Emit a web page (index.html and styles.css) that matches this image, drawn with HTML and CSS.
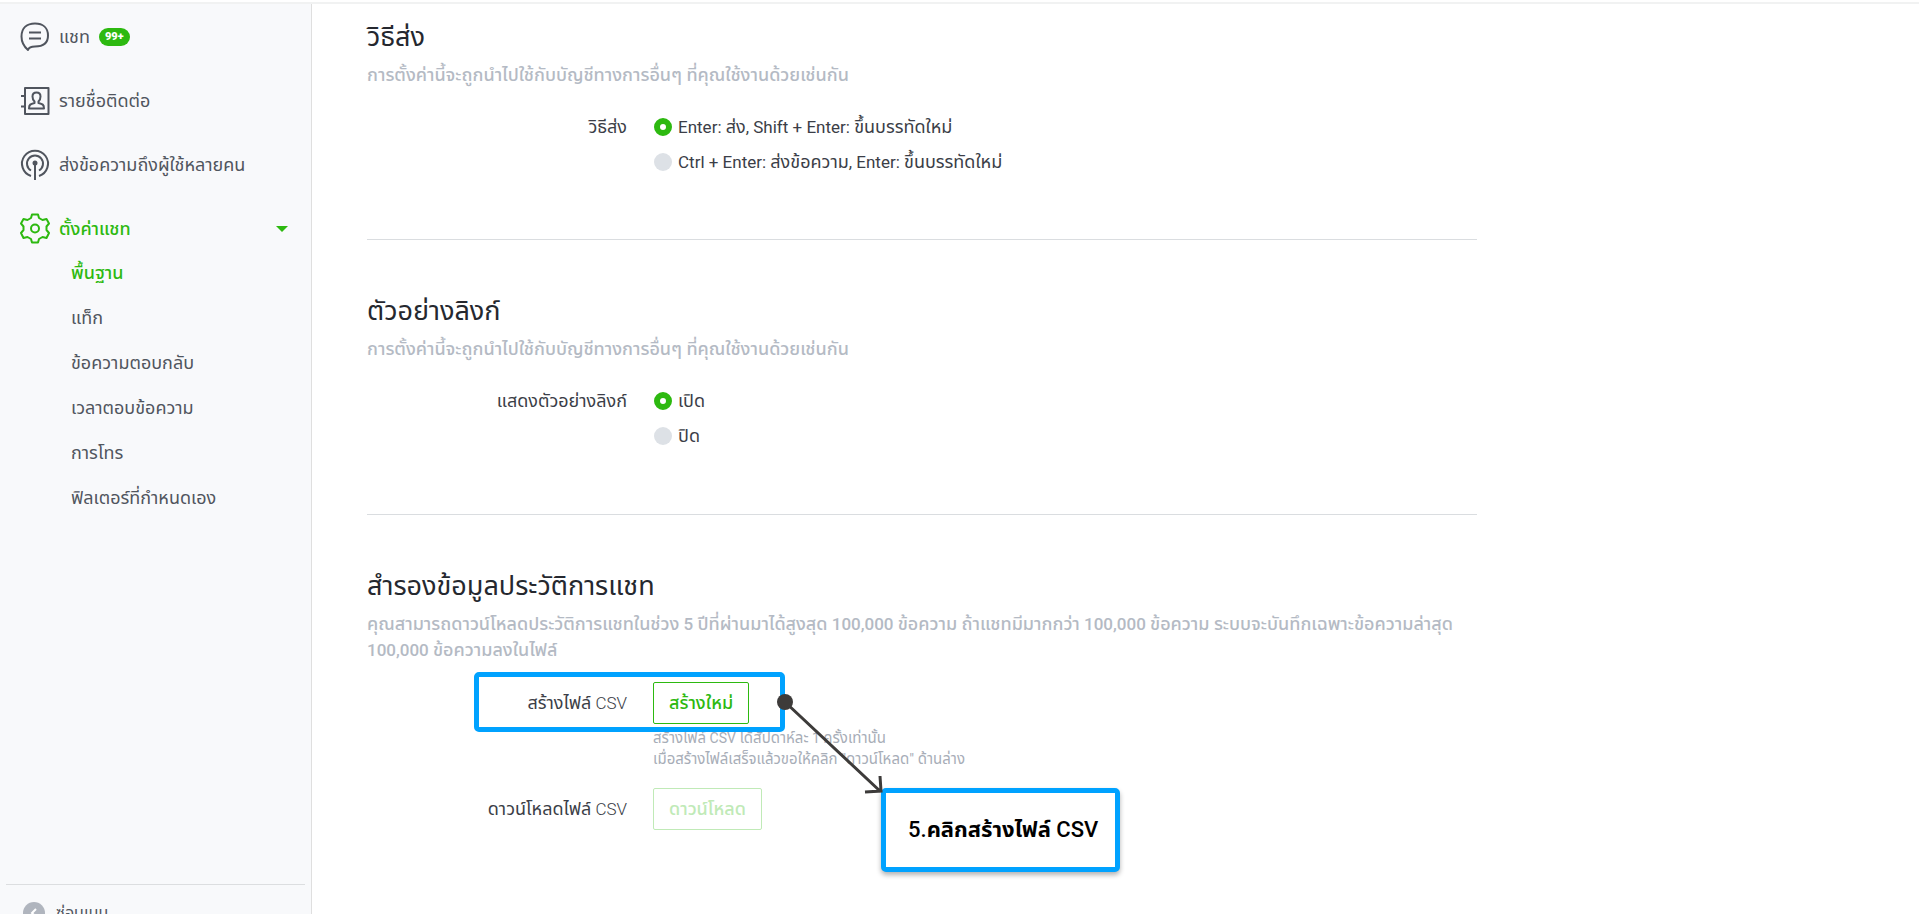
FILE: index.html
```html
<!DOCTYPE html>
<html lang="th">
<head>
  <meta charset="UTF-8">
  <title>ตั้งค่าแชท</title>
  <meta name="viewport" content="width=device-width, initial-scale=1.0">
  <link rel="stylesheet" href="styles.css">
</head>
<body>

  <div class="app">
    <aside class="sidebar">
      <nav>
        <a class="nav-item" href="#">
          <svg class="icon" viewBox="0 0 30 30"><path d="M8 28 C4.500 25 1.500 21 1.500 14.500 C1.500 6 7 1.500 15 1.500 C23 1.500 28 6 28 13.500 C28 21 23 24.500 15 24.500 C11 24.500 9 25 8 28 Z M9 10.500 H21 M9 16.500 H21"/></svg>
          <span>แชท</span>
          <span class="badge">99+</span>
        </a>
        <a class="nav-item" href="#">
          <svg class="icon" viewBox="0 0 30 30"><path d="M5 2 H28.500 V28 H5 Z M1 10 H5 M1 20.500 H5 M9 22.500 H24 C24 18.500 22.500 18 18.500 17 V15.500 C20 14 20.500 12.500 20.500 10.500 C20.500 8 19 6.500 16.500 6.500 C14 6.500 12.500 8 12.500 10.500 C12.500 12.500 13 14 14.500 15.500 V17 C10.500 18 9 18.500 9 22.500 Z"/></svg>
          <span>รายชื่อติดต่อ</span>
        </a>
        <a class="nav-item" href="#">
          <svg class="icon" viewBox="0 0 30 30"><path d="M11 26 A13 13 0 1 1 19 26 M11 20.500 A8 8 0 1 1 19 20.500 M15 13 V30"/><circle class="fill" cx="15" cy="13" r="2.500"/></svg>
          <span>ส่งข้อความถึงผู้ใช้หลายคน</span>
        </a>
        <a class="nav-item active" href="#">
          <svg class="icon" viewBox="0 0 30 30"><path d="M12 .5 H18 L19 4 L22.500 6 L26.500 5 L29 9.500 L26.500 12.500 V16 L29 19 L26.500 24 L22.500 23 L19 25 L18 28.500 H12 L11 25 L7.500 23 L3.500 24 L1 19 L3.500 16 V12.500 L1 9.500 L3.500 5 L7.500 6 L11 4 Z"/><circle cx="15" cy="14.500" r="4"/></svg>
          <span>ตั้งค่าแชท</span>
          <svg class="caret" viewBox="0 0 12 6"><path d="M0 0 H12 L6 6 Z"/></svg>
        </a>
        <div class="subnav">
          <a class="current" href="#">พื้นฐาน</a>
          <a href="#">แท็ก</a>
          <a href="#">ข้อความตอบกลับ</a>
          <a href="#">เวลาตอบข้อความ</a>
          <a href="#">การโทร</a>
          <a href="#">ฟิลเตอร์ที่กำหนดเอง</a>
        </div>
      </nav>
      <button class="hide-menu" type="button">
        <svg viewBox="0 0 22 22"><circle cx="11" cy="11" r="11"/><path d="M13 7 L9 11 L13 15"/></svg>
        ซ่อนเมนู
      </button>
    </aside>

    <main class="content">
      <section>
        <h2>วิธีส่ง</h2>
        <p class="desc">การตั้งค่านี้จะถูกนำไปใช้กับบัญชีทางการอื่นๆ ที่คุณใช้งานด้วยเช่นกัน</p>
        <div class="row" role="radiogroup" aria-labelledby="send-label">
          <span class="label" id="send-label">วิธีส่ง</span>
          <div class="options">
            <label><input type="radio" name="send" checked><span><span class="en">Enter: </span>ส่ง<span class="en">, Shift + Enter: </span>ขึ้นบรรทัดใหม่</span></label>
            <label><input type="radio" name="send"><span><span class="en">Ctrl + Enter: </span>ส่งข้อความ<span class="en">, Enter: </span>ขึ้นบรรทัดใหม่</span></label>
          </div>
        </div>
      </section>

      <section>
        <h2>ตัวอย่างลิงก์</h2>
        <p class="desc">การตั้งค่านี้จะถูกนำไปใช้กับบัญชีทางการอื่นๆ ที่คุณใช้งานด้วยเช่นกัน</p>
        <div class="row" role="radiogroup" aria-labelledby="preview-label">
          <span class="label" id="preview-label">แสดงตัวอย่างลิงก์</span>
          <div class="options">
            <label><input type="radio" name="preview" checked><span>เปิด</span></label>
            <label><input type="radio" name="preview"><span>ปิด</span></label>
          </div>
        </div>
      </section>

      <section>
        <h2>สำรองข้อมูลประวัติการแชท</h2>
        <p class="desc">คุณสามารถดาวน์โหลดประวัติการแชทในช่วง<span class="en"> 5 </span>ปีที่ผ่านมาได้สูงสุด<span class="en"> 100,000 </span>ข้อความ ถ้าแชทมีมากกว่า<span class="en"> 100,000 </span>ข้อความ ระบบจะบันทึกเฉพาะข้อความล่าสุด<span class="en"> 100,000 </span>ข้อความลงในไฟล์</p>
        <div class="row csv">
          <label class="label" for="create">สร้างไฟล์<span class="en light"> CSV</span></label>
          <div>
            <button class="btn" id="create" type="button">สร้างใหม่</button>
            <p class="hint">สร้างไฟล์<span class="en"> CSV </span>ได้สัปดาห์ละ<span class="en"> 1 </span>ครั้งเท่านั้น<br>เมื่อสร้างไฟล์เสร็จแล้วขอให้คลิก "ดาวน์โหลด" ด้านล่าง</p>
          </div>
          <div class="highlight"></div>
          <div class="callout">5.<b>คลิกสร้างไฟล์</b> CSV</div>
          <svg class="arrow" viewBox="0 0 110 110"><path d="M8 8 L104 98 M88 98 L104 97 L103 82"/><circle cx="8" cy="8" r="8"/></svg>
        </div>
        <div class="row">
          <label class="label" for="download">ดาวน์โหลดไฟล์<span class="en light"> CSV</span></label>
          <button class="btn" id="download" type="button" disabled>ดาวน์โหลด</button>
        </div>
      </section>
    </main>
  </div>

</body>
</html>
```

FILE: styles.css
```css
* { box-sizing: border-box; }
body { margin: 0; font-family: Roboto, "Noto Sans Thai", "Noto Sans", sans-serif; font-size: 18px; color: #3b3e47; background: #fff; }
h2, p { margin: 0; }
a { color: inherit; text-decoration: none; }
button { font-family: inherit; cursor: pointer; }
/* latin runs sit one step below the thai size */
.en { font-size: 17px; }

.app { display: flex; height: 100vh; overflow: hidden; padding-top: 4px; background: linear-gradient(#fff 2px, #f1f2f2 2px, #f1f2f2 4px, #fff 4px); }

/* sidebar */
.sidebar { display: flex; flex-direction: column; flex: none; width: 312px; padding-top: 1px; background: #f8f9fb; border-right: 1px solid #dfdfdf; color: #50555e; }
.nav-item { display: flex; align-items: center; height: 64px; padding: 0 23px 0 20px; }
.icon { width: 30px; height: 30px; margin-right: 9px; overflow: visible; fill: none; stroke: #50555e; stroke-width: 2; stroke-linejoin: round; }
.icon .fill { fill: #50555e; stroke: none; }
.badge { margin-left: 9px; padding: 0 6px; height: 18px; line-height: 18px; border-radius: 9px; background: #2db910; color: #fff; font-size: 11px; font-weight: 900; }
.active { color: #2db910; font-weight: 500; }
.active .icon { stroke: #2db910; }
.caret { width: 12px; height: 6px; margin-left: auto; fill: #2db910; }
.subnav { margin-top: -10px; }
.subnav a { display: flex; align-items: center; height: 45px; padding-left: 71px; }
.subnav .current { color: #2db910; font-weight: 500; }
.hide-menu { display: flex; align-items: center; gap: 11px; height: 56px; flex: none; margin: auto 6px -26px; padding: 0 17px; border: 0; border-top: 1px solid #dcdee0; background: none; color: #50555e; font-size: 16px; }
.hide-menu svg { width: 22px; height: 22px; fill: #b0b5be; }
.hide-menu path { fill: none; stroke: #fff; stroke-width: 2; }

/* settings */
.content { flex: 1; padding: 0 56px 0 55px; }
section { max-width: 1110px; height: 275px; padding-top: 53px; }
section:first-child { height: 236px; padding-top: 15px; }
section:not(:last-child) { border-bottom: 1px solid #dadde0; }
h2 { font-size: 27px; line-height: 36px; font-weight: 400; color: #25282f; }
.desc { margin-top: 7px; line-height: 26px; color: #b4bac4; font-weight: 500; }
.row { display: flex; gap: 26px; margin-top: 26px; }
.label { width: 260px; flex: none; line-height: 26px; text-align: right; }
.light { font-weight: 300; }
.options { display: flex; flex-direction: column; gap: 9px; }
.options label { display: flex; align-items: center; gap: 6px; line-height: 26px; }
input[type="radio"] { appearance: none; width: 18px; height: 18px; margin: 0 0 0 1px; border-radius: 50%; background: #dde1e6; }
input[type="radio"]:checked { background: #fff; border: 6px solid #2db910; }
.btn { display: block; height: 42px; padding: 0 15px; border: 1px solid #2db910; border-radius: 2px; background: #fff; color: #2db910; font-size: 18px; font-weight: 500; }
.btn:disabled { border-color: #c0eab7; color: #c0eab7; }
.hint { margin-top: 4px; font-size: 15px; line-height: 21px; color: #a7adb7; }
.hint .en { font-size: 14px; }
.row.csv { position: relative; margin-top: 19px; }
.csv .label, .csv + .row .label { line-height: 42px; }
.csv + .row { margin-top: 18px; }

/* guide drawn over the form */
.highlight { position: absolute; left: 107px; top: -10px; width: 311px; height: 60px; border: 5px solid #00a2ff; border-radius: 5px; }
.arrow { position: absolute; left: 410px; top: 12px; width: 110px; height: 110px; fill: #3d3b3a; }
.arrow path { fill: none; stroke: #3d3b3a; stroke-width: 3; }
.callout { position: absolute; left: 514px; top: 106px; height: 84px; padding: 0 17px 0 22px; border: 5px solid #00a2ff; border-radius: 5px; background: #fff; box-shadow: 0 3px 5px rgba(0, 0, 0, .3); color: #000; font-size: 22px; line-height: 74px; font-weight: 500; white-space: nowrap; }
```
